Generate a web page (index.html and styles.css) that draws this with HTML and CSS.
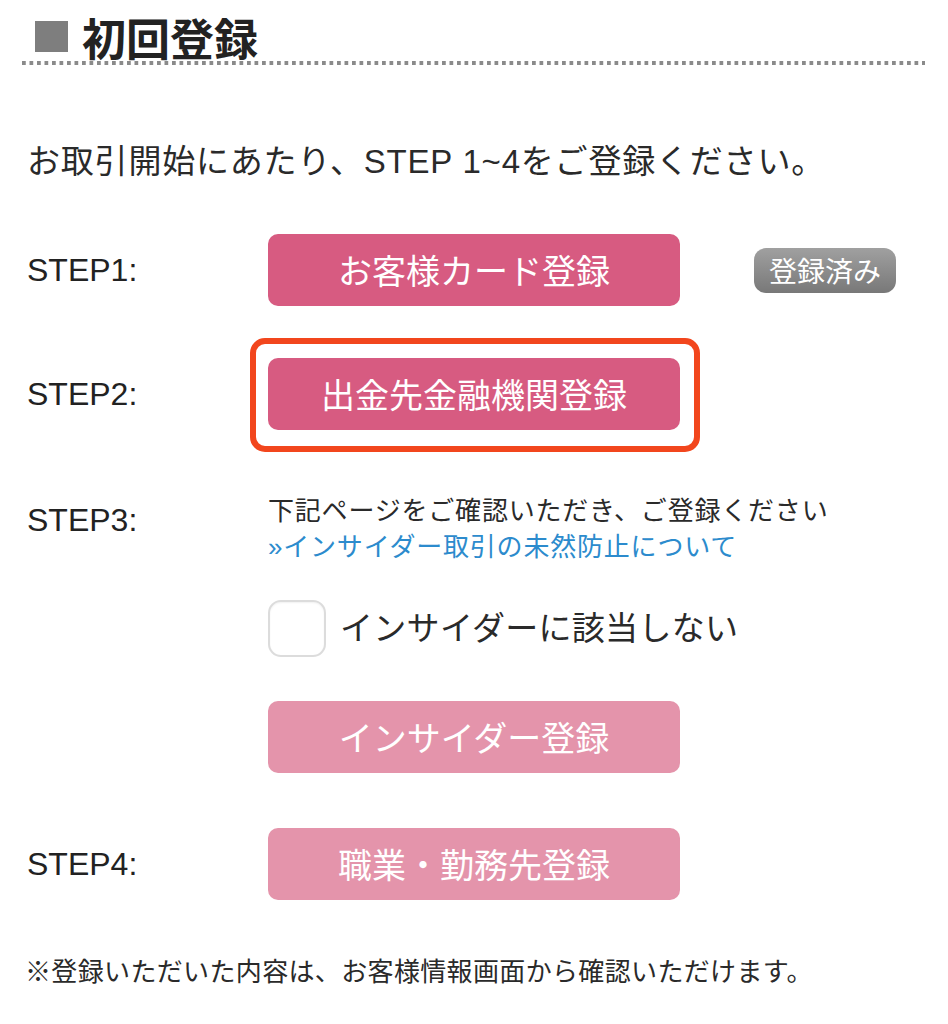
FILE: index.html
```html
<!DOCTYPE html>
<html lang="ja">
<head>
<meta charset="utf-8">
<title>初回登録</title>
<link rel="stylesheet" href="styles.css">
</head>
<body>
<div class="page">
  <header class="title-bar">
    <span class="square"></span>
    <h1 class="title">初回登録</h1>
  </header>
  <div class="dots"></div>

  <p class="intro">お取引開始にあたり、STEP 1~4をご登録ください。</p>

  <div class="steps">
    <div class="step step-1">
      <div class="label">STEP1:</div>
      <div class="body inline">
        <button class="btn">お客様カード登録</button>
        <span class="badge">登録済み</span>
      </div>
    </div>

    <div class="step step-2">
      <div class="label">STEP2:</div>
      <div class="body">
        <div class="highlight">
          <button class="btn">出金先金融機関登録</button>
        </div>
      </div>
    </div>

    <div class="step step-3">
      <div class="label label-top">STEP3:</div>
      <div class="body">
        <p class="note">下記ページをご確認いただき、ご登録ください<br><a class="link" href="#">»インサイダー取引の未然防止について</a></p>
        <label class="check-row">
          <span class="checkbox"></span>
          <span class="check-text">インサイダーに該当しない</span>
        </label>
        <button class="btn btn-light btn-insider">インサイダー登録</button>
      </div>
    </div>

    <div class="step step-4">
      <div class="label">STEP4:</div>
      <div class="body">
        <button class="btn btn-light">職業・勤務先登録</button>
      </div>
    </div>
  </div>

  <p class="footnote">※登録いただいた内容は、お客様情報画面から確認いただけます。</p>
</div>
</body>
</html>
```

FILE: styles.css
```css
* { box-sizing: border-box; }

html, body {
  margin: 0;
  padding: 0;
  background: #ffffff;
}

body {
  font-family: "Liberation Sans", "Noto Sans CJK JP", sans-serif;
  color: #2a2a2a;
}

.page {
  width: 948px;
  padding: 0 23px 0 22px;
}

.title-bar {
  display: flex;
  align-items: center;
  height: 61px;
  padding-top: 12px;
}

.square {
  display: block;
  width: 33px;
  height: 31px;
  margin-left: 13px;
  margin-right: 14px;
  background: #7e7e7e;
}

.title {
  margin: 0;
  font-family: "Noto Sans CJK JP", sans-serif;
  font-weight: 700;
  font-size: 44px;
  line-height: 48px;
  color: #222;
  letter-spacing: 0;
}

.dots {
  height: 4px;
  background-image: linear-gradient(to right, #8a8a8a 0, #8a8a8a 4px, transparent 4px);
  background-size: 7.5px 4px;
  background-repeat: repeat-x;
}

.intro {
  margin: 77px 0 0 5px;
  font-size: 33px;
  line-height: 40px;
  letter-spacing: 0.8px;
  white-space: nowrap;
}

.steps {
  padding-left: 5px;
  margin-top: 52px;
}

.step {
  display: grid;
  grid-template-columns: 241px auto;
  align-items: center;
}

.step-2 { margin-top: 52px; }
.step-3 { margin-top: 63px; align-items: start; }
.step-4 { margin-top: 55px; }

.label {
  font-size: 32px;
  line-height: 36px;
  color: #222;
}

.label-top { padding-top: 9px; }

.body {
  display: flex;
  flex-direction: column;
  align-items: flex-start;
}

.body.inline {
  flex-direction: row;
  align-items: center;
}

.btn {
  display: block;
  width: 412px;
  height: 72px;
  border: none;
  border-radius: 10px;
  background: #d75b81;
  color: #ffffff;
  font-family: "Noto Sans CJK JP", sans-serif;
  font-size: 34px;
  line-height: 72px;
  padding: 0;
  text-align: center;
  letter-spacing: 0;
}

.btn-light {
  background: #e494ab;
}

.badge {
  display: block;
  margin-left: 74px;
  padding: 0 15px;
  height: 45px;
  border-radius: 12px;
  background: linear-gradient(#a0a0a0, #787878);
  color: #ffffff;
  font-family: "Noto Sans CJK JP", sans-serif;
  font-size: 28px;
  line-height: 45px;
  white-space: nowrap;
}

.highlight {
  margin: -20px -20px -22px -18px;
  padding: 14px 14px 16px 12px;
  border: 6px solid #f2461d;
  border-radius: 15px;
}

.note {
  margin: 0;
  font-size: 26px;
  line-height: 36px;
  letter-spacing: 0.8px;
  white-space: nowrap;
  color: #2a2a2a;
}

.link {
  color: #2c8bcd;
  text-decoration: none;
}

.check-row {
  display: flex;
  align-items: center;
  margin-top: 35px;
}

.checkbox {
  display: block;
  width: 58px;
  height: 57px;
  border: 2px solid #dcdcdc;
  border-radius: 13px;
  background: #fff;
  box-shadow: inset 0 1px 2px rgba(0,0,0,0.06);
}

.check-text {
  margin-left: 14px;
  font-size: 33px;
  line-height: 40px;
  letter-spacing: 0.3px;
  color: #2a2a2a;
}

.btn-insider {
  margin-top: 44px;
}

.footnote {
  margin: 54px 0 0 3px;
  font-size: 26px;
  line-height: 36px;
  letter-spacing: 0.35px;
  white-space: nowrap;
  color: #2a2a2a;
}
```
